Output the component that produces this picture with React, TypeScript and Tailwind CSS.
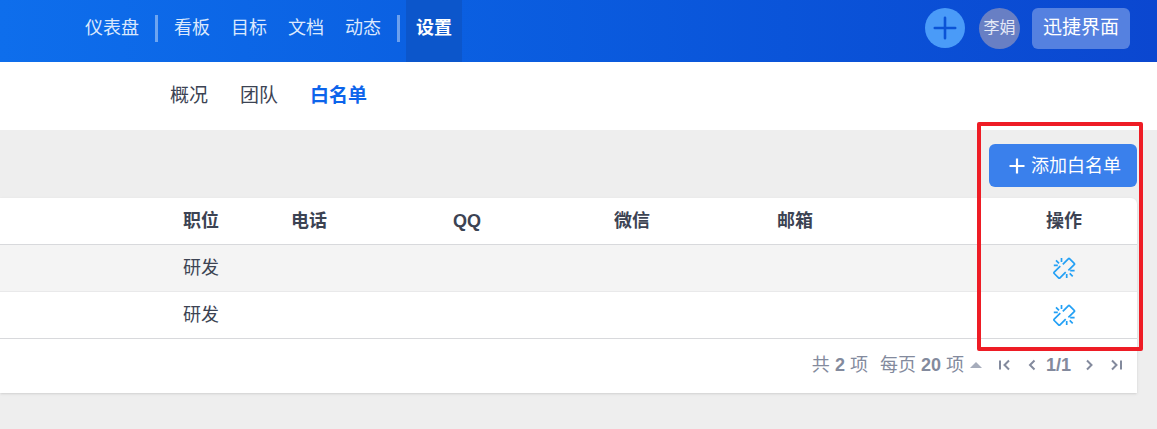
import { useState } from 'react'

const NAV = ['看板', '目标', '文档', '动态']
const TABS = ['概况', '团队', '白名单']

interface Member {
  id: number
  role: string
  phone: string
  qq: string
  wechat: string
  email: string
}

const MEMBERS: Member[] = [
  { id: 1, role: '研发', phone: '', qq: '', wechat: '', email: '' },
  { id: 2, role: '研发', phone: '', qq: '', wechat: '', email: '' },
]

function UnlinkIcon() {
  return (
    <svg
      viewBox="0 0 24 24"
      className="w-6 h-6"
      fill="none"
      stroke="currentColor"
      strokeWidth="1.7"
      strokeLinejoin="round"
    >
      <path d="M10.8 8.3 16.3 2.8Q17 2.1 17.7 2.8L22.2 7.3Q22.9 8 22.2 8.7L16.4 14.3" />
      <path d="M8.3 10.2 2.2 16.1Q1.5 16.8 2.2 17.5L6.6 21.9Q7.3 22.6 8 21.9L13.7 16.2" />
      <path d="M9.5 2v4M4 4.4 7 7.4M1.8 9.4h4M14.7 18v4M17.7 17.4l3 3M18.2 14.6h4.4" />
    </svg>
  )
}

function PagerIcon({ d }: { d: string }) {
  return (
    <svg viewBox="0 0 12 12" className="w-3 h-3" fill="none" stroke="currentColor" strokeWidth="2">
      <path d={d} />
    </svg>
  )
}

function Header() {
  return (
    <header className="flex items-center h-[62px] pl-[85px] pr-[27px] text-lg text-[#dbe8fd] bg-linear-to-r from-[#0e6eec] to-[#0b47d0]">
      <nav className="flex items-center self-stretch whitespace-nowrap">
        <a href="#dashboard" className="pb-1.5">仪表盘</a>
        <span className="w-[3px] h-[27px] ml-4 mr-1.5 mb-1.5 bg-white/40" />
        <div className="flex gap-px">
          {NAV.map((item) => (
            <a key={item} href={`#${item}`} className="px-2.5 pb-1.5">
              {item}
            </a>
          ))}
        </div>
        <span className="w-[3px] h-[27px] mx-1.5 mb-1.5 bg-white/40" />
        <a
          href="#settings"
          aria-current="page"
          className="flex items-center self-stretch px-2.5 pb-1.5 font-bold text-white bg-[#0c56cb]"
        >
          设置
        </a>
      </nav>
      <div className="flex items-center ml-auto mb-1.5 whitespace-nowrap">
        <button
          aria-label="添加"
          className="flex items-center justify-center w-10 h-10 rounded-full bg-[#4a9bf8] text-[#0b53d6]"
        >
          <svg viewBox="0 0 24 24" className="w-6 h-6" fill="none" stroke="currentColor" strokeWidth="2.6" strokeLinecap="round">
            <path d="M12 1.8v20.4M1.8 12h20.4" />
          </svg>
        </button>
        <button className="flex items-center justify-center w-[41px] h-[41px] ml-3.5 rounded-full bg-[#687fc4] text-base text-[#e3e8f6]">
          李娟
        </button>
        <button className="h-[41px] ml-3 px-[11px] rounded-md bg-[#5581e0] text-[19px] text-white">
          迅捷界面
        </button>
      </div>
    </header>
  )
}

function Pager() {
  return (
    <div className="flex items-center justify-end h-[54px] pr-3.5 pb-0.5 whitespace-nowrap text-[#838a9d]">
      <span>
        共 <strong>2</strong> 项
      </span>
      <button className="flex items-center ml-3">
        <span>
          每页 <strong>20</strong> 项
        </span>
        <svg viewBox="0 0 12 6" className="w-3 h-1.5 ml-1.5" fill="#a6acbb">
          <path d="M0 6 6 0l6 6z" />
        </svg>
      </button>
      <button aria-label="第一页" className="ml-4">
        <PagerIcon d="M2 1.5v9M11 1.5 6.5 6l4.5 4.5" />
      </button>
      <button aria-label="上一页" className="ml-4">
        <PagerIcon d="M8.5 1.5 4 6 8.5 10.5" />
      </button>
      <strong className="mx-2">1/1</strong>
      <button aria-label="下一页" className="ml-1">
        <PagerIcon d="M4 1.5 8.5 6 4 10.5" />
      </button>
      <button aria-label="最后一页" className="ml-4">
        <PagerIcon d="M1 1.5 5.5 6 1 10.5M10 1.5v9" />
      </button>
    </div>
  )
}

export default function App() {
  const [tab, setTab] = useState('白名单')

  return (
    <div className="min-h-screen bg-[#eeeeee] text-lg text-[#3c4353] font-['Liberation_Sans','Noto_Sans_CJK_SC',sans-serif]">
      <Header />

      {/* Sub navigation */}
      <div className="flex items-center gap-8 h-[68px] pl-[170px] bg-white text-[19px]">
        {TABS.map((t) => (
          <button
            key={t}
            onClick={() => setTab(t)}
            className={t === tab ? 'font-bold text-[#0c64eb]' : ''}
          >
            {t}
          </button>
        ))}
      </div>

      <main className="relative pt-3.5 pr-5">
        <div className="flex justify-end">
          <button className="flex items-center gap-1.5 h-[43px] pl-5 pr-4 rounded-md bg-[#3a80ec] text-white">
            <svg viewBox="0 0 16 16" className="w-4 h-4" fill="none" stroke="currentColor" strokeWidth="2.2">
              <path d="M8 0.5v15M0.5 8h15" />
            </svg>
            添加白名单
          </button>
        </div>

        <section className="mt-[11px] rounded-tr-md bg-white shadow">
          <table className="w-full table-fixed border-collapse text-left">
            <thead>
              <tr className="h-[46px] border-b border-[#d8d9dc]">
                <th className="w-[173px]" />
                <th className="w-[108px] px-2.5">职位</th>
                <th className="w-[162px] px-2.5">电话</th>
                <th className="w-[161px] px-2.5">QQ</th>
                <th className="w-[163px] px-2.5">微信</th>
                <th className="px-2.5">邮箱</th>
                <th className="w-[146px] text-center">操作</th>
              </tr>
            </thead>
            <tbody>
              {MEMBERS.map((m) => (
                <tr key={m.id} className="h-[47px] border-b border-[#e9e9ea] odd:bg-[#f4f4f4] last:border-[#d8d9dc]">
                  <td />
                  <td className="px-2.5">{m.role}</td>
                  <td className="px-2.5">{m.phone}</td>
                  <td className="px-2.5">{m.qq}</td>
                  <td className="px-2.5">{m.wechat}</td>
                  <td className="px-2.5">{m.email}</td>
                  <td>
                    <button aria-label="移除" className="flex mx-auto text-[#23a0f5]">
                      <UnlinkIcon />
                    </button>
                  </td>
                </tr>
              ))}
            </tbody>
          </table>
          <Pager />
        </section>

        {/* Highlight around the action column */}
        <div className="absolute -top-2 right-3.5 w-[166px] h-[229px] rounded-xs border-4 border-[#ee1c25] pointer-events-none" />
      </main>
    </div>
  )
}
